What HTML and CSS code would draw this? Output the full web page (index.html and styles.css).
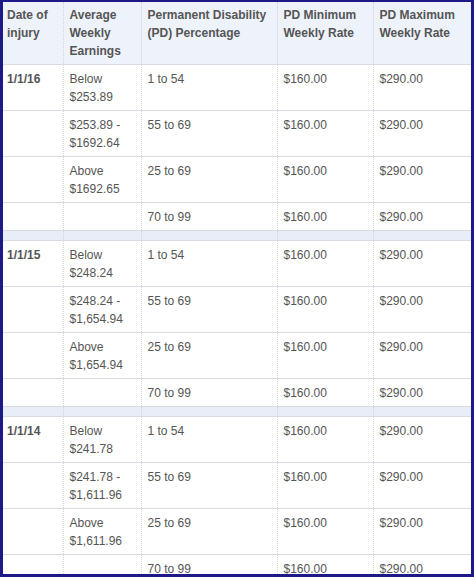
FILE: index.html
```html
<!DOCTYPE html>
<html>
<head>
<meta charset="utf-8">
<link rel="stylesheet" href="styles.css">
</head>
<body>
<div class="frame">
<table class="rates">
<colgroup>
<col class="c1"><col class="c2"><col class="c3"><col class="c4"><col class="c5">
</colgroup>
<thead>
<tr>
<th>Date of injury</th>
<th>Average Weekly Earnings</th>
<th>Permanent Disability (PD) Percentage</th>
<th>PD Minimum Weekly Rate</th>
<th>PD Maximum Weekly Rate</th>
</tr>
</thead>
<tbody>
<tr><td class="date">1/1/16</td><td>Below<br>$253.89</td><td>1 to 54</td><td>$160.00</td><td>$290.00</td></tr>
<tr><td></td><td>$253.89 -<br>$1692.64</td><td>55 to 69</td><td>$160.00</td><td>$290.00</td></tr>
<tr><td></td><td>Above<br>$1692.65</td><td>25 to 69</td><td>$160.00</td><td>$290.00</td></tr>
<tr><td></td><td></td><td>70 to 99</td><td>$160.00</td><td>$290.00</td></tr>
<tr class="spacer"><td></td><td></td><td></td><td></td><td></td></tr>
<tr><td class="date">1/1/15</td><td>Below<br>$248.24</td><td>1 to 54</td><td>$160.00</td><td>$290.00</td></tr>
<tr><td></td><td>$248.24 -<br>$1,654.94</td><td>55 to 69</td><td>$160.00</td><td>$290.00</td></tr>
<tr><td></td><td>Above<br>$1,654.94</td><td>25 to 69</td><td>$160.00</td><td>$290.00</td></tr>
<tr><td></td><td></td><td>70 to 99</td><td>$160.00</td><td>$290.00</td></tr>
<tr class="spacer"><td></td><td></td><td></td><td></td><td></td></tr>
<tr><td class="date">1/1/14</td><td>Below<br>$241.78</td><td>1 to 54</td><td>$160.00</td><td>$290.00</td></tr>
<tr><td></td><td>$241.78 -<br>$1,611.96</td><td>55 to 69</td><td>$160.00</td><td>$290.00</td></tr>
<tr><td></td><td>Above<br>$1,611.96</td><td>25 to 69</td><td>$160.00</td><td>$290.00</td></tr>
<tr><td></td><td></td><td>70 to 99</td><td>$160.00</td><td>$290.00</td></tr>
</tbody>
</table>
</div>
</body>
</html>
```

FILE: styles.css
```css
html, body {
  margin: 0;
  padding: 0;
  background: #ffffff;
}

.frame {
  box-sizing: border-box;
  width: 474px;
  height: 577px;
  border-style: solid;
  border-color: #1d1a88;
  border-width: 2px 3px 3px 3px;
  overflow: hidden;
  background: #ffffff;
}

.rates {
  width: 468px;
  border-collapse: collapse;
  table-layout: fixed;
  font-family: "Liberation Sans", Arial, sans-serif;
  font-size: 12px;
  line-height: 18px;
  color: #555555;
}

.c1 { width: 60px; }
.c2 { width: 78px; }
.c3 { width: 136px; }
.c4 { width: 96px; }
.c5 { width: 98px; }

.rates th,
.rates td {
  text-align: left;
  vertical-align: top;
  padding: 5px 6px 4px 6px;
  border-bottom: 1px solid #d9dce3;
  border-left: 1px dotted #cfd4de;
}

.rates th:first-child,
.rates td:first-child {
  border-left: none;
  padding-left: 4px;
}

.rates th {
  font-weight: bold;
  background: #eef2fa;
  padding-top: 4px;
  padding-bottom: 4px;
}

.rates td.date {
  font-weight: bold;
}

.rates tr.spacer td {
  background: #e8edf8;
  padding: 5px 6px 4px 6px;
  height: 0;
}
```
